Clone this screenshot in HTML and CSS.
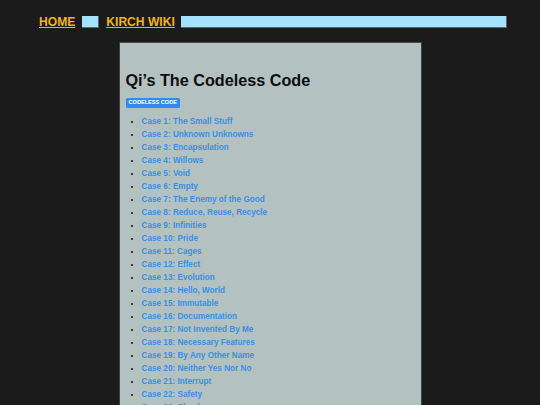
FILE: index.html
```html
<!DOCTYPE html>
<html>
<head>
<meta charset="utf-8">
<link rel="stylesheet" href="styles.css">
</head>
<body>
<nav class="nav">
  <a class="nav-link" href="#">HOME</a>
  <span class="nav-box"></span>
  <a class="nav-link" href="#">KIRCH WIKI</a>
  <span class="nav-box nav-bar"></span>
</nav>
<main class="panel">
  <h1 class="title">Qi’s The Codeless Code</h1>
  <span class="badge">CODELESS CODE</span>
  <ul class="cases">
    <li><a href="#">Case 1: The Small Stuff</a></li>
    <li><a href="#">Case 2: Unknown Unknowns</a></li>
    <li><a href="#">Case 3: Encapsulation</a></li>
    <li><a href="#">Case 4: Willows</a></li>
    <li><a href="#">Case 5: Void</a></li>
    <li><a href="#">Case 6: Empty</a></li>
    <li><a href="#">Case 7: The Enemy of the Good</a></li>
    <li><a href="#">Case 8: Reduce, Reuse, Recycle</a></li>
    <li><a href="#">Case 9: Infinities</a></li>
    <li><a href="#">Case 10: Pride</a></li>
    <li><a href="#">Case 11: Cages</a></li>
    <li><a href="#">Case 12: Effect</a></li>
    <li><a href="#">Case 13: Evolution</a></li>
    <li><a href="#">Case 14: Hello, World</a></li>
    <li><a href="#">Case 15: Immutable</a></li>
    <li><a href="#">Case 16: Documentation</a></li>
    <li><a href="#">Case 17: Not Invented By Me</a></li>
    <li><a href="#">Case 18: Necessary Features</a></li>
    <li><a href="#">Case 19: By Any Other Name</a></li>
    <li><a href="#">Case 20: Neither Yes Nor No</a></li>
    <li><a href="#">Case 21: Interrupt</a></li>
    <li><a href="#">Case 22: Safety</a></li>
    <li><a href="#">Case 23: Slumber</a></li>
    <li><a href="#">Case 24: Ownership</a></li>
  </ul>
</main>
</body>
</html>
```
FILE: styles.css
```css
html, body {
  margin: 0;
  padding: 0;
  background: #1b1b1b;
  font-family: "Liberation Sans", Arial, sans-serif;
  overflow: hidden;
  height: 405px;
}
.nav {
  display: flex;
  align-items: center;
  padding: 16px 33px 0 39px;
  height: 12px;
}
.nav-link {
  color: #f2b31f;
  font-weight: bold;
  font-size: 12.1px;
  line-height: 12px;
  text-decoration: underline;
}
.nav-box {
  display: block;
  width: 17px;
  height: 12px;
  box-sizing: border-box;
  background: #a3e3ff;
  border-right: 1px solid #56666c;
  border-bottom: 1px solid #56666c;
  margin: 0 7px;
}
.nav-bar {
  flex: 1;
  margin: 0 0 0 6px;
}
.panel {
  width: 303px;
  box-sizing: border-box;
  margin: 14px auto 0;
  background: #b3c2c1;
  border-top: 1px solid #4a4e4e;
  border-left: 1px solid #3c4040;
  border-right: 1px solid #3c4040;
  padding: 28px 7px 0 6px;
  min-height: 400px;
}
.title {
  margin: 0;
  font-size: 16.2px;
  line-height: 19.4px;
  font-weight: bold;
  color: #0d0d0d;
}
.badge {
  display: inline-block;
  margin-top: 8px;
  background: #2f8cea;
  color: #ffffff;
  font-size: 5.6px;
  font-weight: bold;
  line-height: 9.5px;
  padding: 0 3px;
  border-radius: 1.5px;
  vertical-align: top;
}
.cases {
  margin: 7px 0 0;
  padding-left: 16px;
  font-size: 8.2px;
  line-height: 13px;
  font-weight: bold;
  color: #111;
}
.cases a {
  color: #3a8fe3;
  text-decoration: none;
}
```
